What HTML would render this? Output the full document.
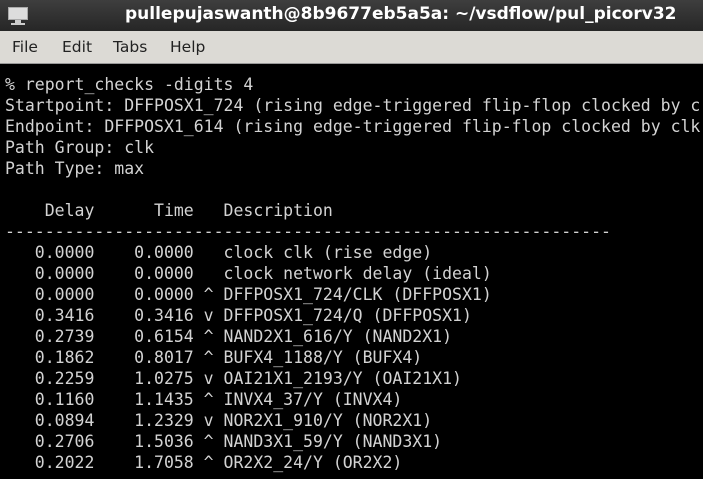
<!DOCTYPE html>
<html><head><style>
*{margin:0;padding:0;box-sizing:border-box}
body{width:703px;height:479px;overflow:hidden;background:#000;position:relative;font-family:"Liberation Sans",sans-serif}
#title{position:absolute;left:0;top:0;width:703px;height:31px;background:linear-gradient(#3e3e3e,#262626);color:#fff;font-weight:bold;font-size:17px;font-family:"DejaVu Sans",sans-serif}
#title span{position:absolute;left:125px;top:4px;white-space:nowrap}
#icon{position:absolute;left:8px;top:7px;width:20px;height:13px;background:#ddd;border:1px solid #aaa}
#icon2{position:absolute;left:15px;top:20px;width:6px;height:3px;background:#ccc}
#icon3{position:absolute;left:11px;top:23px;width:14px;height:2px;background:#ccc}
#menu{position:absolute;left:0;top:31px;width:703px;height:33px;background:#dcdad5;border-bottom:1px solid #999;font-family:"DejaVu Sans",sans-serif;font-size:15.5px;color:#222}
#menu span{position:absolute;top:7px}
pre{position:absolute;left:5px;top:74px;font-family:"DejaVu Sans Mono",monospace;font-size:16.5px;line-height:21px;color:#d3d3d3;white-space:pre}
</style></head><body>
<div id="title"><div id="icon"></div><div id="icon2"></div><div id="icon3"></div><span>pullepujaswanth@8b9677eb5a5a: ~/vsdflow/pul_picorv32</span></div>
<div id="menu"><span style="left:12px">File</span><span style="left:62px">Edit</span><span style="left:113px">Tabs</span><span style="left:170px">Help</span></div>
<pre>% report_checks -digits 4
Startpoint: DFFPOSX1_724 (rising edge-triggered flip-flop clocked by c
Endpoint: DFFPOSX1_614 (rising edge-triggered flip-flop clocked by clk
Path Group: clk
Path Type: max

    Delay      Time   Description
-------------------------------------------------------------
   0.0000    0.0000   clock clk (rise edge)
   0.0000    0.0000   clock network delay (ideal)
   0.0000    0.0000 ^ DFFPOSX1_724/CLK (DFFPOSX1)
   0.3416    0.3416 v DFFPOSX1_724/Q (DFFPOSX1)
   0.2739    0.6154 ^ NAND2X1_616/Y (NAND2X1)
   0.1862    0.8017 ^ BUFX4_1188/Y (BUFX4)
   0.2259    1.0275 v OAI21X1_2193/Y (OAI21X1)
   0.1160    1.1435 ^ INVX4_37/Y (INVX4)
   0.0894    1.2329 v NOR2X1_910/Y (NOR2X1)
   0.2706    1.5036 ^ NAND3X1_59/Y (NAND3X1)
   0.2022    1.7058 ^ OR2X2_24/Y (OR2X2)</pre>
</body></html>
